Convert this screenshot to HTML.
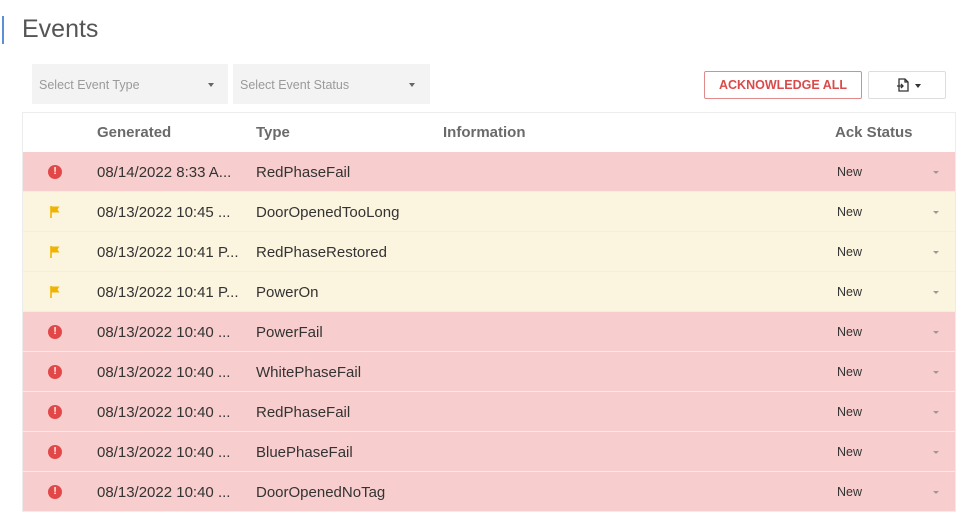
<!DOCTYPE html>
<html><head><style>
body{margin:0;width:962px;height:510px;background:#fff;font-family:"Liberation Sans",sans-serif;position:relative;overflow:hidden;color:#333}
.a{position:absolute}
.bar{left:2px;top:16px;width:2px;height:28px;background:#5b8fd6}
.title{left:22px;top:15px;font-size:25px;color:#555}
.sel{top:64px;height:40px;background:#f3f3f3;font-size:12.5px;color:#9a9a9a;line-height:42px;box-sizing:border-box;padding-left:7px}
.caret{position:absolute;width:0;height:0;border-left:3.5px solid transparent;border-right:3.5px solid transparent;border-top:4px solid #666}
.btn{top:71px;height:28px;border:1px solid #e08a8a;border-radius:2px;box-sizing:border-box;color:#d94b4b;font-weight:bold;font-size:12.5px;line-height:27px;text-align:center}
.tbl{left:22px;top:112px;width:934px;height:400px;border:1px solid #ececec;box-sizing:border-box}
.hd{top:113px;height:40px;line-height:40px;font-weight:bold;font-size:15px;color:#6a6a6a}
.row{left:23px;width:932px;height:40px;border-bottom:1px solid #eee;box-sizing:border-box}
.r{background:#f8cdcd}.y{background:#fbf4de}
.row span{position:absolute;top:1px;line-height:39px;font-size:15px;color:#333}
.row .n{font-size:12.5px;left:814px;color:#333}
.dot{position:absolute;left:25px;top:13px;width:14px;height:14px;border-radius:50%;background:#e34848;color:#fff;font-size:10px;font-weight:bold;line-height:14px;text-align:center}
</style></head><body>
<div class="a bar"></div>
<div class="a title">Events</div>
<div class="a sel" style="left:32px;width:196px">Select Event Type<div class="caret" style="left:176px;top:19px"></div></div>
<div class="a sel" style="left:233px;width:197px">Select Event Status<div class="caret" style="left:176px;top:19px"></div></div>
<div class="a btn" style="left:704px;width:158px">ACKNOWLEDGE ALL</div>
<div class="a btn" style="left:868px;width:78px;border-color:#ddd;color:#333">
<svg width="14" height="15" viewBox="0 0 14 15" style="position:absolute;left:27px;top:6px"><path d="M3 1h6l3 3v9H3zM9 1v3h3M1 8h6M5 6l2 2-2 2" fill="none" stroke="#333" stroke-width="1.3"/></svg>
<div class="caret" style="left:46px;top:12px;border-top-color:#333"></div></div>
<div class="a tbl"></div>
<div class="a hd" style="left:97px">Generated</div>
<div class="a hd" style="left:256px">Type</div>
<div class="a hd" style="left:443px">Information</div>
<div class="a hd" style="left:835px">Ack Status</div>
<div id="rows"></div>
<script>
var d=[["r","08/14/2022 8:33 A...","RedPhaseFail"],["y","08/13/2022 10:45 ...","DoorOpenedTooLong"],["y","08/13/2022 10:41 P...","RedPhaseRestored"],["y","08/13/2022 10:41 P...","PowerOn"],["r","08/13/2022 10:40 ...","PowerFail"],["r","08/13/2022 10:40 ...","WhitePhaseFail"],["r","08/13/2022 10:40 ...","RedPhaseFail"],["r","08/13/2022 10:40 ...","BluePhaseFail"],["r","08/13/2022 10:40 ...","DoorOpenedNoTag"]];
var h="";d.forEach(function(x,i){var ic=x[0]=="r"?'<div class="dot">!</div>':'<svg style="position:absolute;left:27px;top:14px" width="10" height="12"><path d="M1 0v12" stroke="#f0b400" stroke-width="1.6"/><path d="M1.5 0.5h8l-2 3 2 3h-8z" fill="#f0b400"/></svg>';
h+='<div class="a row '+x[0]+'" style="top:'+(152+i*40)+'px">'+ic+'<span style="left:74px">'+x[1]+'</span><span style="left:233px">'+x[2]+'</span><span class="n">New</span><div class="caret" style="left:910px;top:19px;border-top-color:#999;border-left-width:3px;border-right-width:3px;border-top-width:3px"></div></div>';});
document.getElementById("rows").innerHTML=h;
</script>
</body></html>
